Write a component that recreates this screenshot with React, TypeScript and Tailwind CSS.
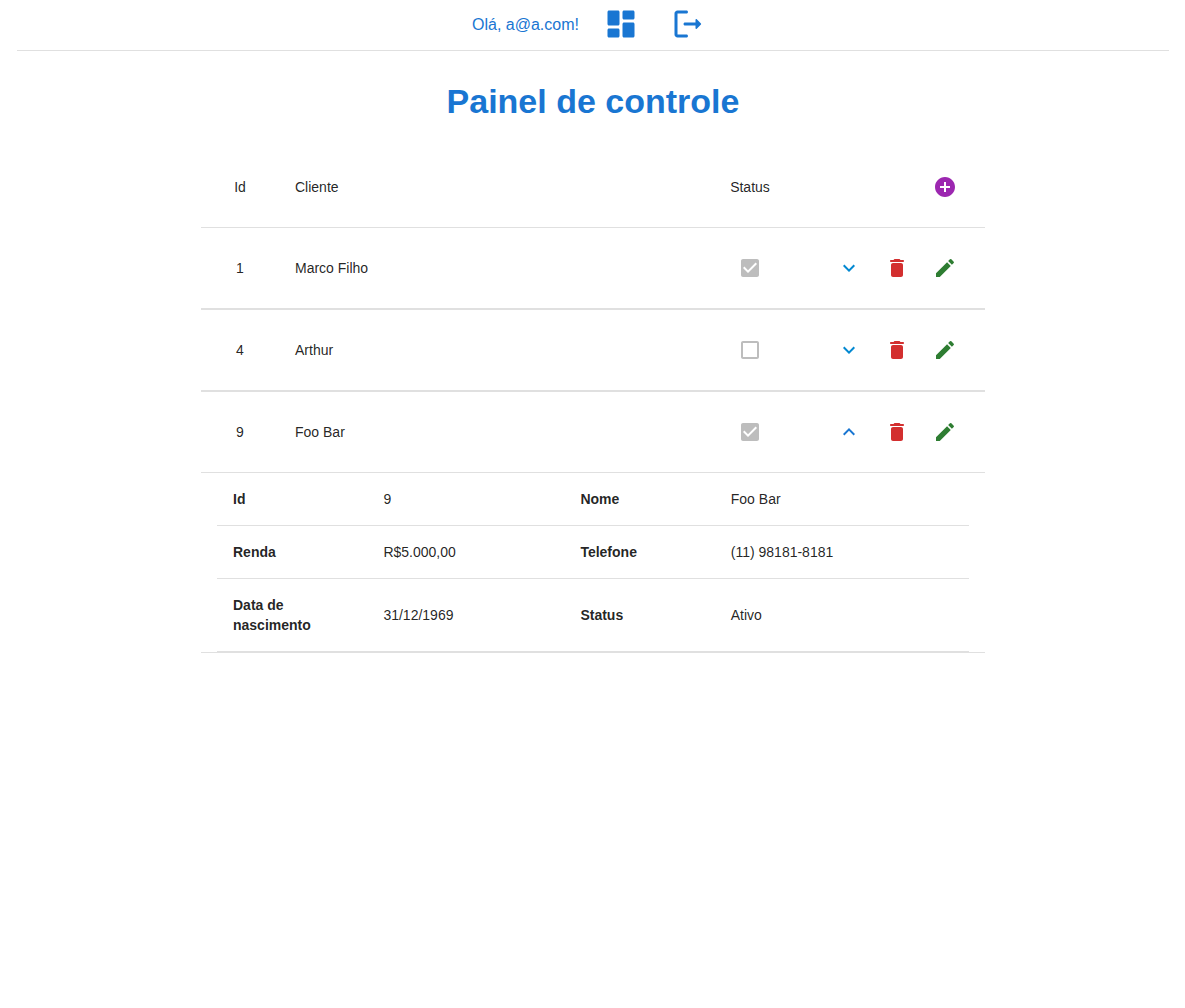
import React, { Fragment, useState } from "react";

const paths = {
  dashboard:
    "M4 13h6c.55 0 1-.45 1-1V4c0-.55-.45-1-1-1H4c-.55 0-1 .45-1 1v8c0 .55.45 1 1 1zm0 8h6c.55 0 1-.45 1-1v-4c0-.55-.45-1-1-1H4c-.55 0-1 .45-1 1v4c0 .55.45 1 1 1zm10 0h6c.55 0 1-.45 1-1v-8c0-.55-.45-1-1-1h-6c-.55 0-1 .45-1 1v8c0 .55.45 1 1 1zM13 4v4c0 .55.45 1 1 1h6c.55 0 1-.45 1-1V4c0-.55-.45-1-1-1h-6c-.55 0-1 .45-1 1z",
  logout:
    "M5 5h6c.55 0 1-.45 1-1s-.45-1-1-1H5c-1.1 0-2 .9-2 2v14c0 1.1.9 2 2 2h6c.55 0 1-.45 1-1s-.45-1-1-1H5V5zM20.65 11.65l-2.79-2.79c-.32-.32-.86-.1-.86.35V11h-7c-.55 0-1 .45-1 1s.45 1 1 1h7v1.79c0 .45.54.67.85.35l2.79-2.79c.2-.19.2-.51.01-.7z",
  add: "M12 2C6.48 2 2 6.48 2 12s4.48 10 10 10 10-4.48 10-10S17.52 2 12 2zm5 11h-4v4h-2v-4H7v-2h4V7h2v4h4v2z",
  down: "M7.41 8.59 12 13.17l4.59-4.58L18 10l-6 6-6-6 1.41-1.41z",
  up: "M7.41 15.41 12 10.83l4.59 4.58L18 14l-6-6-6 6z",
  trash:
    "M6 19c0 1.1.9 2 2 2h8c1.1 0 2-.9 2-2V9c0-1.1-.9-2-2-2H8c-1.1 0-2 .9-2 2v10zM18 4h-2.5l-.71-.71c-.18-.18-.44-.29-.7-.29H9.91c-.26 0-.52.11-.7.29L8.5 4H6c-.55 0-1 .45-1 1s.45 1 1 1h12c.55 0 1-.45 1-1s-.45-1-1-1z",
  edit: "M3 17.25V21h3.75L17.81 9.94l-3.75-3.75L3 17.25zM20.71 7.04c.39-.39.39-1.02 0-1.41l-2.34-2.34a.9959.9959 0 0 0-1.41 0l-1.83 1.83 3.75 3.75 1.83-1.83z",
  checked:
    "M19 3H5c-1.11 0-2 .9-2 2v14c0 1.1.89 2 2 2h14c1.11 0 2-.9 2-2V5c0-1.1-.89-2-2-2zm-9 14l-5-5 1.41-1.41L10 14.17l7.59-7.59L19 8l-9 9z",
  unchecked:
    "M19 5v14H5V5h14m0-2H5c-1.1 0-2 .9-2 2v14c0 1.1.9 2 2 2h14c1.1 0 2-.9 2-2V5c0-1.1-.9-2-2-2z",
};

function Icon({ name, className = "size-6" }: { name: keyof typeof paths; className?: string }) {
  return (
    <svg viewBox="0 0 24 24" fill="currentColor" aria-hidden="true" className={className}>
      <path d={paths[name]} />
    </svg>
  );
}

type IconButtonProps = {
  name: keyof typeof paths;
  label: string;
  className: string;
  onClick?: () => void;
};

function IconButton({ name, label, className, onClick }: IconButtonProps) {
  return (
    <button type="button" aria-label={label} onClick={onClick} className={`cursor-pointer rounded-full p-3 hover:bg-black/5 ${className}`}>
      <Icon name={name} />
    </button>
  );
}

type Client = {
  id: number;
  name: string;
  active: boolean;
  income: string;
  phone: string;
  birth: string;
};

const clients: Client[] = [
  { id: 1, name: "Marco Filho", active: true, income: "", phone: "", birth: "" },
  { id: 4, name: "Arthur", active: false, income: "", phone: "", birth: "" },
  { id: 9, name: "Foo Bar", active: true, income: "R$5.000,00", phone: "(11) 98181-8181", birth: "31/12/1969" },
];

function Details({ client }: { client: Client }) {
  const rows = [
    ["Id", String(client.id), "Nome", client.name],
    ["Renda", client.income, "Telefone", client.phone],
    ["Data de nascimento", client.birth, "Status", client.active ? "Ativo" : "Inativo"],
  ];
  return (
    <table className="w-full table-fixed text-left">
      <colgroup>
        <col className="w-[20%]" />
        <col className="w-[197px]" />
        <col className="w-[20%]" />
        <col />
      </colgroup>
      <tbody>
        {rows.map(([labelA, valueA, labelB, valueB]) => (
          <tr key={labelA} className="border-b border-[#e0e0e0]">
            <th scope="row" className="p-4 font-bold">{labelA}</th>
            <td className="p-4">{valueA}</td>
            <th scope="row" className="p-4 font-bold">{labelB}</th>
            <td className="p-4">{valueB}</td>
          </tr>
        ))}
      </tbody>
    </table>
  );
}

export default function App() {
  const [openId, setOpenId] = useState<number | null>(9);

  return (
    <div className="min-h-screen bg-white pl-px font-['Liberation_Sans',Arial,sans-serif] text-sm/5 text-black/87">
      <header className="px-4">
        <nav className="mx-auto flex max-w-6xl items-center justify-center border-b border-[#e0e0e0] text-[#1976d2]">
          <span className="mr-4 text-base">Olá, a@a.com!</span>
          <a href="#painel" aria-label="Painel de controle" className="px-2 pt-[6px] pb-2">
            <Icon name="dashboard" className="size-9" />
          </a>
          <a href="#sair" aria-label="Sair" className="ml-[15px] px-2 pt-[6px] pb-2">
            <Icon name="logout" className="size-9" />
          </a>
        </nav>
      </header>

      <main id="painel" className="px-4">
        <h1 className="mt-[30px] mb-[26px] text-center text-[34px]/10 font-bold text-[#1976d2]">Painel de controle</h1>

        <table className="mx-auto w-full max-w-[784px] border-separate border-spacing-0 [&>*>tr>*]:border-b [&>*>tr>*]:border-[#e0e0e0]">
          <thead>
            <tr>
              <th scope="col" className="w-[78px] p-4 text-center font-normal">Id</th>
              <th scope="col" className="p-4 text-left font-normal">Cliente</th>
              <th scope="col" className="w-[118px] p-4 text-center font-normal">Status</th>
              <th scope="col" className="w-44 p-4">
                <div className="flex justify-end">
                  <IconButton name="add" label="Adicionar cliente" className="text-[#9c27b0]" />
                </div>
              </th>
            </tr>
          </thead>
          <tbody>
            {clients.map((client) => {
              const open = client.id === openId;
              return (
                <Fragment key={client.id}>
                  <tr>
                    <td className="p-4 text-center">{client.id}</td>
                    <td className="p-4">{client.name}</td>
                    <td className="p-4">
                      <label className="relative mx-auto block size-6 text-[#bdbdbd]">
                        <input type="checkbox" checked={client.active} disabled readOnly aria-label={`Status de ${client.name}`} className="absolute inset-0 size-6 opacity-0" />
                        <Icon name={client.active ? "checked" : "unchecked"} />
                      </label>
                    </td>
                    <td className="p-4">
                      <div className="flex justify-end">
                        <IconButton
                          name={open ? "up" : "down"}
                          label={open ? "Ocultar detalhes" : "Mostrar detalhes"}
                          className={open ? "text-[#1976d2]" : "text-[#0288d1]"}
                          onClick={() => setOpenId(open ? null : client.id)}
                        />
                        <IconButton name="trash" label="Excluir" className="text-[#d32f2f]" />
                        <IconButton name="edit" label="Editar" className="text-[#2e7d32]" />
                      </div>
                    </td>
                  </tr>
                  <tr>
                    <td colSpan={4} className="px-4">{open && <Details client={client} />}</td>
                  </tr>
                </Fragment>
              );
            })}
          </tbody>
        </table>
      </main>
    </div>
  );
}
